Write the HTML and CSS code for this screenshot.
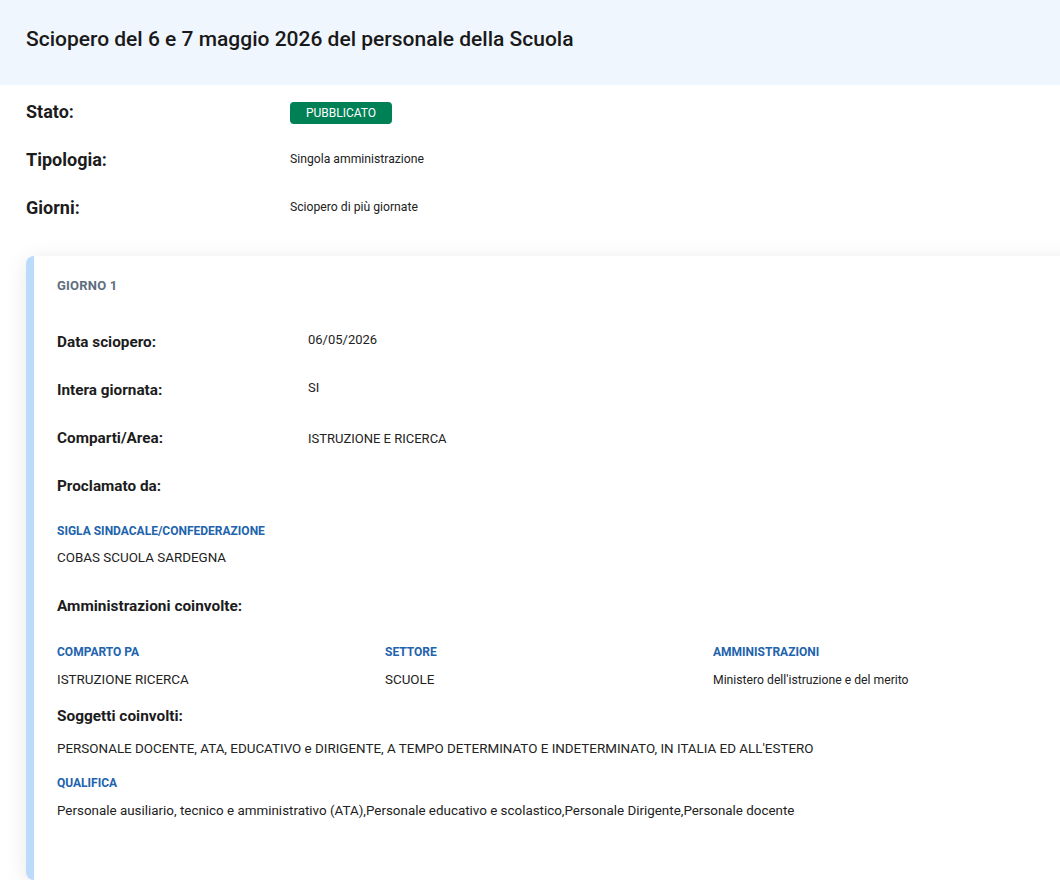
FILE: index.html
```html
<!DOCTYPE html>
<html lang="it">
<head>
<meta charset="utf-8">
<title>Sciopero</title>
<link rel="stylesheet" href="styles.css">
</head>
<body>
<header class="hero">
  <h1 class="hero-title">Sciopero del 6 e 7 maggio 2026 del personale della Scuola</h1>
</header>
<section class="summary">
  <div class="row">
    <div class="label">Stato:</div>
    <div class="value"><span class="badge">PUBBLICATO</span></div>
  </div>
  <div class="row">
    <div class="label">Tipologia:</div>
    <div class="value small">Singola amministrazione</div>
  </div>
  <div class="row">
    <div class="label">Giorni:</div>
    <div class="value small">Sciopero di più giornate</div>
  </div>
</section>
<section class="card">
  <div class="day-title">GIORNO 1</div>
  <div class="card-rows">
    <div class="crow">
      <div class="clabel">Data sciopero:</div>
      <div class="cvalue up">06/05/2026</div>
    </div>
    <div class="crow">
      <div class="clabel">Intera giornata:</div>
      <div class="cvalue up">SI</div>
    </div>
    <div class="crow">
      <div class="clabel">Comparti/Area:</div>
      <div class="cvalue">ISTRUZIONE E RICERCA</div>
    </div>
    <div class="crow">
      <div class="clabel">Proclamato da:</div>
      <div class="cvalue"></div>
    </div>
  </div>
  <div class="field-head sigla">SIGLA SINDACALE/CONFEDERAZIONE</div>
  <div class="field-text cobas">COBAS SCUOLA SARDEGNA</div>
  <div class="section-label amm">Amministrazioni coinvolte:</div>
  <div class="cols">
    <div class="col">
      <div class="field-head">COMPARTO PA</div>
      <div class="field-text colval">ISTRUZIONE RICERCA</div>
    </div>
    <div class="col">
      <div class="field-head">SETTORE</div>
      <div class="field-text colval">SCUOLE</div>
    </div>
    <div class="col">
      <div class="field-head">AMMINISTRAZIONI</div>
      <div class="field-text colval small">Ministero dell'istruzione e del merito</div>
    </div>
  </div>
  <div class="section-label sogg">Soggetti coinvolti:</div>
  <div class="field-text pers">PERSONALE DOCENTE, ATA, EDUCATIVO e DIRIGENTE, A TEMPO DETERMINATO E INDETERMINATO, IN ITALIA ED ALL'ESTERO</div>
  <div class="field-head qual">QUALIFICA</div>
  <div class="field-text qualval">Personale ausiliario, tecnico e amministrativo (ATA),Personale educativo e scolastico,Personale Dirigente,Personale docente</div>
</section>
</body>
</html>
```

FILE: styles.css
```css
html {
  overflow: hidden;
}
body {
  margin: 0;
  background: #ffffff;
  font-family: "Roboto", "Liberation Sans", sans-serif;
  color: #1c1c1c;
}
.hero {
  background: #f0f6fe;
  height: 85px;
  box-sizing: border-box;
  padding: 22px 26px 0;
}
.hero-title {
  margin: 0;
  font-size: 21px;
  line-height: 34px;
  font-weight: 500;
  color: #191919;
}
.summary {
  padding: 2px 26px 0;
}
.row {
  display: grid;
  grid-template-columns: 264px 1fr;
  align-items: center;
  height: 48px;
}
.label {
  font-size: 18px;
  font-weight: bold;
  color: #1c1c1c;
}
.value {
  font-size: 12px;
  color: #222;
}
.badge {
  display: inline-block;
  width: 102px;
  height: 22px;
  line-height: 22px;
  text-align: center;
  background: #008055;
  color: #fff;
  border-radius: 4px;
  font-size: 12px;
  margin-top: 3px;
}
.card {
  margin: 25px -40px 0 26px;
  height: 624px;
  box-sizing: border-box;
  background: #fff;
  border-left: 8px solid #bcdafa;
  border-radius: 8px 0 0 8px;
  box-shadow: 0 4px 22px rgba(0, 0, 0, 0.10);
  padding: 20px 0 0 23px;
}
.day-title {
  font-size: 13px;
  line-height: 20px;
  font-weight: bold;
  color: #5d6e80;
  letter-spacing: 0.2px;
}
.card-rows {
  margin-top: 22px;
}
.crow {
  display: grid;
  grid-template-columns: 251px 1fr;
  align-items: center;
  height: 48px;
}
.clabel {
  font-size: 15.3px;
  font-weight: bold;
  color: #1c1c1c;
}
.cvalue {
  font-size: 13px;
  color: #222;
}
.cvalue.up {
  padding-bottom: 6px;
}
.field-head {
  font-size: 12px;
  line-height: 18px;
  font-weight: bold;
  color: #2163ad;
}
.field-text {
  font-size: 13.4px;
  line-height: 22px;
  color: #222;
}
.small {
  font-size: 12.2px;
}
.sigla {
  margin-top: 12px;
}
.cobas {
  margin-top: 7px;
}
.section-label {
  font-size: 15.4px;
  line-height: 24px;
  font-weight: bold;
  color: #1c1c1c;
}
.amm {
  margin-top: 25px;
}
.cols {
  display: grid;
  grid-template-columns: 328px 328px 328px;
  margin-top: 25px;
}
.colval {
  margin-top: 8px;
}
.sogg {
  margin-top: 13px;
}
.pers {
  margin-top: 10px;
}
.qual {
  margin-top: 14px;
}
.qualval {
  margin-top: 8px;
}
```
